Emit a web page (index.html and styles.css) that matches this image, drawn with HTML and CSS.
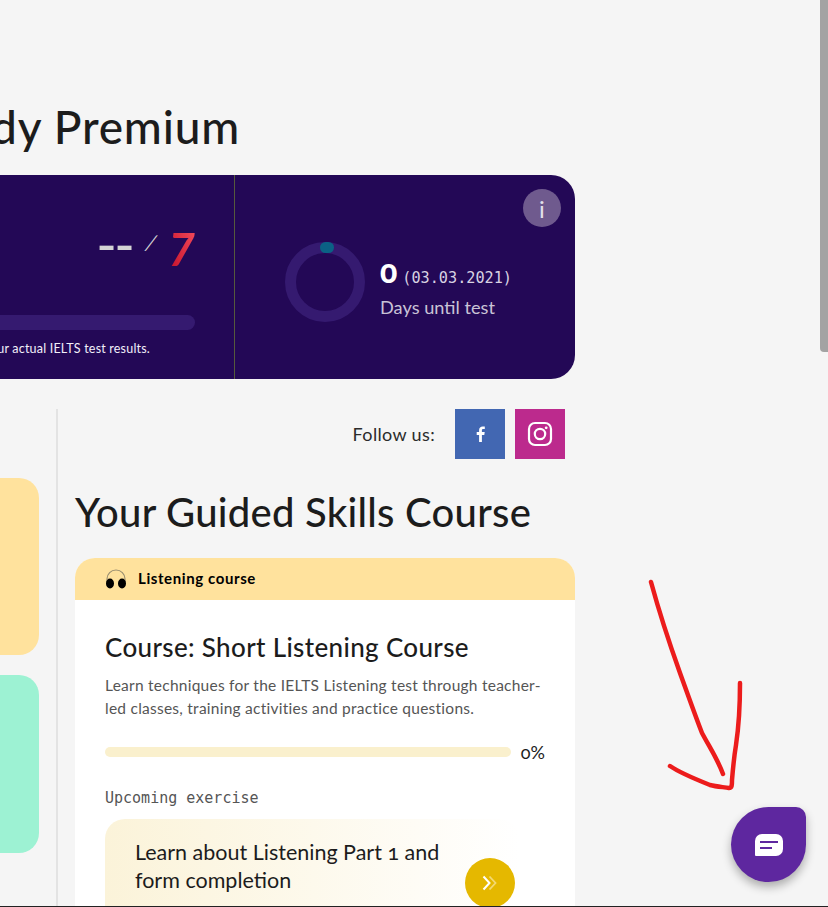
FILE: index.html
```html
<!DOCTYPE html>
<html lang="en">
<head>
<meta charset="utf-8">
<title>Study Premium</title>
<link rel="stylesheet" href="styles.css">
</head>
<body>
<div class="viewport">
  <main class="wrap">
    <h1 class="page-title">Study Premium</h1>
    <section class="hero">
      <div class="hero-score">
        <div class="score-row">
          <span class="score-now">--</span>
          <span class="score-sep">/</span>
          <span class="score-goal">7</span>
        </div>
        <div class="score-bar"></div>
        <p class="score-note">Your score is an estimate of your actual IELTS test results.</p>
      </div>
      <div class="hero-days">
        <svg class="ring" width="80" height="80" viewBox="0 0 80 80" aria-hidden="true">
          <circle cx="40" cy="40" r="34.5" fill="none" stroke="#351a70" stroke-width="11"/>
          <rect x="35" y="0" width="14" height="11" rx="5.5" fill="#0b6185"/>
        </svg>
        <div class="days-text">
          <div class="days-line"><span class="days-num">0</span><span class="days-date">(03.03.2021)</span></div>
          <div class="days-label">Days until test</div>
        </div>
        <span class="info-btn">i</span>
      </div>
    </section>
    <div class="lower">
      <aside class="side">
        <div class="side-card side-yellow"></div>
        <div class="side-card side-mint"></div>
      </aside>
      <section class="content">
        <div class="follow">
          <span class="follow-label">Follow us:</span>
          <a class="social social-fb" href="#" aria-label="Facebook">
            <svg width="14" height="18" viewBox="0 0 14 18" aria-hidden="true"><path d="M8.9 17V9.9h2.4l.4-2.8H8.9V5.4c0-.8.2-1.4 1.4-1.4h1.5V1.5C11.5 1.500 10.600 1.400 9.700 1.400 7.600 1.400 6.100 2.700 6.100 5.100v2H3.700v2.800h2.400V17z" fill="#fff"/></svg>
          </a>
          <a class="social social-ig" href="#" aria-label="Instagram">
            <svg width="26" height="26" viewBox="0 0 26 26" aria-hidden="true"><rect x="2" y="2" width="22" height="22" rx="6" fill="none" stroke="#fff" stroke-width="2.200"/><circle cx="13" cy="13" r="5.200" fill="none" stroke="#fff" stroke-width="2.200"/><circle cx="19.200" cy="6.800" r="1.400" fill="#fff"/></svg>
          </a>
        </div>
        <h2 class="section-title">Your Guided Skills Course</h2>
        <article class="course">
          <header class="course-head">
            <svg width="22" height="20" viewBox="0 0 22 20" aria-hidden="true"><path d="M2 13V10a9 9 0 0 1 18 0v3" fill="none" stroke="#9a8f70" stroke-width="1.200"/><ellipse cx="5" cy="14.500" rx="4" ry="5" fill="#000"/><ellipse cx="17" cy="14.500" rx="4" ry="5" fill="#000"/></svg>
            <span class="course-tag">Listening course</span>
          </header>
          <div class="course-body">
            <h3 class="course-title">Course: Short Listening Course</h3>
            <p class="course-desc">Learn techniques for the IELTS Listening test through teacher-led classes, training activities and practice questions.</p>
            <div class="progress">
              <div class="progress-bar"></div>
              <span class="progress-val">0%</span>
            </div>
            <div class="upcoming">Upcoming exercise</div>
            <div class="exercise">
              <p class="exercise-title">Learn about Listening Part 1 and form completion</p>
              <span class="exercise-go">
                <svg width="18" height="16" viewBox="0 0 18 16" aria-hidden="true"><path d="M8.500 1.500 14.500 8l-6 6.500" fill="none" stroke="#f3d873" stroke-width="1.800"/><path d="M2.500 1.500 8.500 8l-6 6.500" fill="none" stroke="#fff" stroke-width="2"/></svg>
              </span>
            </div>
          </div>
        </article>
      </section>
    </div>
  </main>
  <div class="scrollbar"><div class="scroll-thumb"></div></div>
  <svg class="annotation" width="828" height="907" viewBox="0 0 828 907" aria-hidden="true">
    <path d="M651 582 C660 615 670 645 680 673 C688 695 695 715 702 733 C710 748 718 760 723 774" fill="none" stroke="#ec1c1c" stroke-width="4.500" stroke-linecap="round" stroke-linejoin="round"/>
    <path d="M670 766 C680 773 695 779 710 785 C717 787 724 787 729 788 C732 788 732 785 732 780 C733 768 734 757 736 745 C739 725 740 705 740 683" fill="none" stroke="#ec1c1c" stroke-width="4.500" stroke-linecap="round" stroke-linejoin="round"/>
  </svg>
  <button class="chat" aria-label="Open chat">
    <svg width="28" height="22" viewBox="0 0 28 22" aria-hidden="true"><path d="M7 0h14a7 7 0 0 1 7 7v8a7 7 0 0 1-7 7H1a1 1 0 0 1-1-1V7a7 7 0 0 1 7-7z" fill="#fff"/><path d="M5 8h18" stroke="#5e279f" stroke-width="2"/><path d="M5 14h12" stroke="#5e279f" stroke-width="2"/></svg>
  </button>
</div>
</body>
</html>
```
FILE: styles.css
```css
* { box-sizing: border-box; }
html, body { margin: 0; padding: 0; height: 100%; overflow: hidden; }
body {
  background: #f5f5f5;
  color: #1c1c1c;
  font-family: "Lato", "Open Sans", sans-serif;
  font-variant-numeric: oldstyle-nums;
}
.viewport {
  position: relative;
  display: flex;
  height: 907px;
  overflow: hidden;
  border-bottom: 1px solid #222;
}
.wrap {
  flex: none;
  width: 875px;
  margin-left: -300px;
  margin-right: 245px;
}
.page-title {
  margin: 0;
  padding: 102px 335px 0 0;
  height: 175px;
  text-align: right;
  font-size: 46px;
  line-height: 50px;
  letter-spacing: 0.8px;
  font-weight: 500;
}
.hero {
  display: flex;
  height: 204px;
  background: #230856;
  border-radius: 0 24px 24px 0;
  color: #fff;
}
.hero-score {
  flex: 1;
  display: flex;
  flex-direction: column;
  align-items: flex-end;
  padding: 56px 39px 0 0;
  border-right: 1px solid #555a3c;
}
.score-row {
  display: flex;
  align-items: center;
  height: 36px;
}
.score-now {
  margin: 0 0 5px 0;
  font-family: "DejaVu Sans Mono", monospace;
  font-size: 30px;
  font-weight: 700;
  letter-spacing: -6px;
  color: #d4d4d4;
  transform: scaleX(1.500);
  transform-origin: right center;
}
.score-sep {
  margin: 0 12px 0 18px;
  font-family: "Lato", sans-serif;
  font-size: 20px;
  font-weight: 400;
  color: #d4d4d4;
  transform: translateY(-7px) skewX(-20deg);
}
.score-goal {
  font-size: 46px;
  line-height: 36px;
  font-weight: 700;
  font-style: italic;
  font-variant-numeric: lining-nums;
  background: linear-gradient(70deg, #c2102a, #f2495a);
  -webkit-background-clip: text;
  background-clip: text;
  color: transparent;
}
.score-bar {
  width: 100%;
  height: 15px;
  margin-top: 48px;
  background: #351a70;
  border-radius: 8px;
}
.score-note {
  margin: 10px 45px 0 0;
  font-size: 12.500px;
  line-height: 18px;
  letter-spacing: 0.2px;
  white-space: nowrap;
  color: #f2effa;
}
.hero-days {
  position: relative;
  flex: none;
  width: 340px;
  display: flex;
  align-items: center;
  padding: 12px 0 0 50px;
}
.ring { flex: none; margin-top: -2px; }
.days-text { margin: 6px 0 0 15px; }
.days-line { display: flex; align-items: baseline; }
.days-num {
  font-size: 32px;
  line-height: 36px;
  font-weight: 900;
  color: #fff;
}
.days-date {
  margin-left: 5px;
  font-family: "DejaVu Sans Mono", monospace;
  font-size: 15.200px;
  color: #d8d2e2;
}
.days-label {
  margin-top: 6px;
  font-size: 18.200px;
  line-height: 24px;
  color: #c9c3d6;
}
.info-btn {
  position: absolute;
  top: 14px;
  right: 14px;
  width: 38px;
  height: 38px;
  display: flex;
  align-items: center;
  justify-content: center;
  border-radius: 50%;
  background: #6f5a8e;
  color: #e4e0ea;
  font-size: 24px;
}
.lower {
  display: flex;
  margin-top: 30px;
}
.side {
  flex: none;
  width: 356px;
  padding: 69px 17px 0 0;
}
.side-card { height: 177px; border-radius: 0 20px 20px 0; }
.side-yellow { background: #ffe29d; }
.side-mint { height: 178px; margin-top: 20px; background: #9df2d3; }
.content {
  flex: 1;
  height: 497px;
  padding-left: 17px;
  border-left: 2px solid #e3e3e3;
}
.follow {
  display: flex;
  align-items: center;
  justify-content: flex-end;
  height: 50px;
  padding-right: 10px;
}
.follow-label { margin-right: 20px; font-size: 18px; letter-spacing: 0.35px; color: #2b2b2b; }
.social {
  width: 50px;
  height: 50px;
  display: flex;
  align-items: center;
  justify-content: center;
}
.social-fb { background: #4267b2; }
.social-ig { margin-left: 10px; background: #bc2a8d; }
.section-title {
  margin: 30px 0 23px;
  font-size: 40px;
  line-height: 46px;
  letter-spacing: 0.25px;
  font-weight: 500;
  white-space: nowrap;
}
.course {
  background: #fff;
  border-radius: 20px 20px 0 0;
}
.course-head {
  display: flex;
  align-items: center;
  gap: 11px;
  height: 42px;
  padding-left: 30px;
  background: #ffe29d;
  border-radius: 20px 20px 0 0;
}
.course-tag { margin-top: -2px; font-size: 15px; letter-spacing: 0.6px; font-weight: 700; color: #000; }
.course-body { padding: 30px 30px 0; }
.course-title {
  margin: 0;
  font-size: 26px;
  line-height: 34px;
  letter-spacing: 0.35px;
  font-weight: 500;
}
.course-desc {
  margin: 10px 0 0;
  font-size: 15.500px;
  line-height: 23px;
  letter-spacing: 0.25px;
  color: #555;
}
.progress {
  display: flex;
  align-items: center;
  margin-top: 21px;
  height: 22px;
}
.progress-bar {
  flex: 1;
  height: 10px;
  background: #faf0cd;
  border-radius: 5px;
}
.progress-val { margin-left: 10px; font-size: 18px; color: #1c1c1c; }
.upcoming {
  margin-top: 24px;
  font-family: "DejaVu Sans Mono", monospace;
  font-size: 15px;
  line-height: 22px;
  color: #555;
}
.exercise {
  position: relative;
  height: 110px;
  margin: 10px 0 0;
  padding: 19px 30px 0;
  width: 415px;
  border-radius: 20px;
  background: linear-gradient(90deg, #fbf3d9, #fff);
}
.exercise-title {
  margin: 0;
  width: 320px;
  font-size: 21.500px;
  line-height: 28px;
  color: #1c1c1c;
}
.exercise-go {
  position: absolute;
  top: 39px;
  left: 360px;
  width: 50px;
  height: 50px;
  display: flex;
  align-items: center;
  justify-content: center;
  border-radius: 50%;
  background: #e5b800;
}
.scrollbar {
  flex: none;
  width: 8px;
  margin-left: 0;
  background: #f5f5f5;
}
.scroll-thumb {
  height: 352px;
  background: #a3a3a3;
  border-radius: 0 0 0 4px;
}
.annotation {
  position: absolute;
  top: 0;
  left: 0;
  pointer-events: none;
}
.chat {
  position: absolute;
  left: 731px;
  top: 807px;
  width: 75px;
  height: 75px;
  display: flex;
  align-items: center;
  justify-content: center;
  padding: 0;
  border: 0;
  border-radius: 50% 10px 50% 50%;
  background: #5e279f;
  box-shadow: 0 5px 10px rgba(0, 0, 0, 0.3);
}
```
